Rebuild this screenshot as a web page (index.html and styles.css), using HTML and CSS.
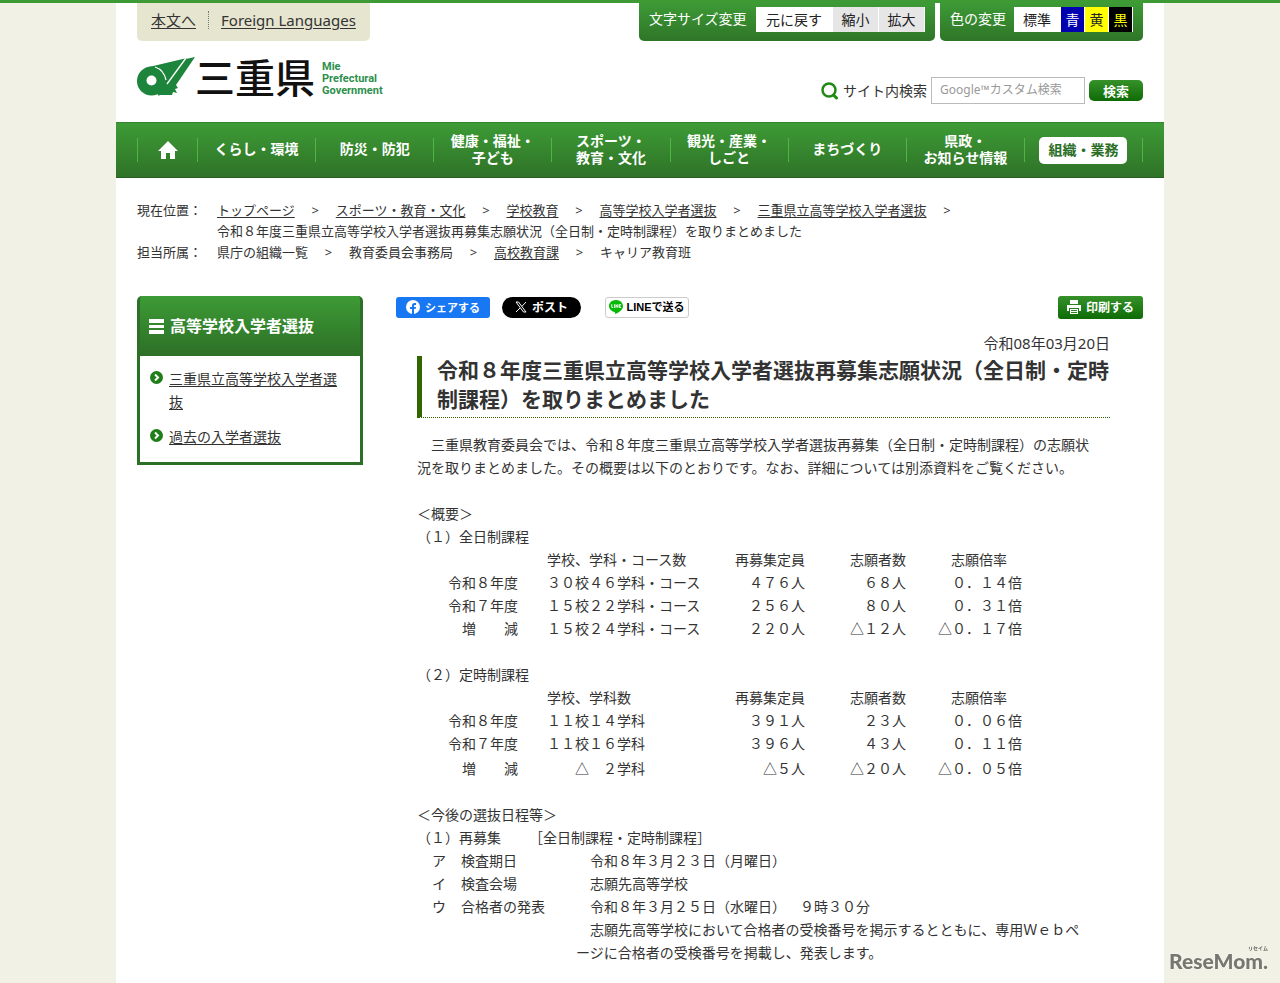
FILE: index.html
```html
<!DOCTYPE html>
<html lang="ja">
    <head>
        <meta charset="UTF-8">
        <meta name="viewport" content="width=device-width, initial-scale=1">
        <title>三重県｜令和８年度三重県立高等学校入学者選抜再募集志願状況</title>
        <link rel="stylesheet" href="styles.css">
    </head>
    <body>
        <div class="page">
            <!-- ヘッダー -->
            <header class="header">
                <div class="tools">
                    <div class="tools-links">
                        <a href="#main">本文へ</a>
                        <a href="#" class="foreign">Foreign Languages</a>
                    </div>
                    <div class="tools-box size-box">
                        <span>文字サイズ変更</span>
                        <div class="btns">
                            <button type="button" class="btn-reset">元に戻す</button>
                            <button type="button" class="btn-gray">縮小</button>
                            <button type="button" class="btn-gray">拡大</button>
                        </div>
                    </div>
                    <div class="tools-box color-box">
                        <span>色の変更</span>
                        <div class="btns">
                            <button type="button" class="btn-std">標準</button>
                            <button type="button" class="btn-blue">青</button>
                            <button type="button" class="btn-yellow">黄</button>
                            <button type="button" class="btn-black">黒</button>
                        </div>
                    </div>
                </div>
                <div class="brand">
                    <a href="#" class="logo">
                        <svg class="logo-mark" viewBox="0 0 58 42" aria-hidden="true">
                            <path fill="#1d843c" d="M12 11 L50 2 L28 31 L22 40 L14 30 Z"/>
                            <circle cx="14.500" cy="25" r="14.500" fill="#1d843c"/>
                            <path fill="none" stroke="#fff" stroke-width="1.300" d="M18 11 Q27 14 29 24"/>
                            <path fill="#1d843c" d="M49 3 L58 1 L39 29 L41 32 L38 33 L40 37 L36 36 L35 39 H22 L28 30 Z"/>
                            <path fill="none" stroke="#fff" stroke-width="1.300" d="M49 2 L30 28"/>
                            <circle cx="14.500" cy="24.500" r="5" fill="#fff"/>
                        </svg>
                        <span class="logo-name">三重県</span>
                        <span class="logo-en">Mie<br>Prefectural<br>Government</span>
                    </a>
                    <form class="search" action="#">
                        <svg class="search-icon" viewBox="0 0 18 18" aria-hidden="true">
                            <circle cx="8" cy="8" r="6.500" fill="none" stroke="#218a14" stroke-width="2.500"/>
                            <path stroke="#218a14" stroke-width="3" stroke-linecap="round" d="M12.500 13 L15.500 16"/>
                        </svg>
                        <label for="q">サイト内検索</label>
                        <input type="text" id="q" placeholder="Google™カスタム検索">
                        <button type="submit">検索</button>
                    </form>
                </div>
            </header>

            <!-- グローバルナビ -->
            <nav class="gnav">
                <ul>
                    <li class="home">
                        <a href="#" aria-label="トップページ">
                            <svg viewBox="0 0 20 18" aria-hidden="true"><path fill="#fff" d="M10 0 L20 10 H17 V18 H12 V12 H8 V18 H3 V10 H0 Z"/></svg>
                        </a>
                    </li>
                    <li><a href="#">くらし・環境</a></li>
                    <li><a href="#">防災・防犯</a></li>
                    <li><a href="#">健康・福祉・<br>子ども</a></li>
                    <li><a href="#">スポーツ・<br>教育・文化</a></li>
                    <li><a href="#">観光・産業・<br>しごと</a></li>
                    <li><a href="#">まちづくり</a></li>
                    <li><a href="#">県政・<br>お知らせ情報</a></li>
                    <li><a href="#" class="current">組織・業務</a></li>
                </ul>
            </nav>

            <!-- 現在位置 -->
            <div class="topicpath">
                <span>現在位置：</span>
                <ul>
                    <li><a href="#">トップページ</a><span class="sep">&gt;</span></li>
                    <li><a href="#">スポーツ・教育・文化</a><span class="sep">&gt;</span></li>
                    <li><a href="#">学校教育</a><span class="sep">&gt;</span></li>
                    <li><a href="#">高等学校入学者選抜</a><span class="sep">&gt;</span></li>
                    <li><a href="#">三重県立高等学校入学者選抜</a><span class="sep">&gt;</span></li>
                    <li>令和８年度三重県立高等学校入学者選抜再募集志願状況（全日制・定時制課程）を取りまとめました</li>
                </ul>
                <span>担当所属：</span>
                <ul>
                    <li>県庁の組織一覧<span class="sep">&gt;</span></li>
                    <li>教育委員会事務局<span class="sep">&gt;</span></li>
                    <li><a href="#">高校教育課</a><span class="sep">&gt;</span></li>
                    <li>キャリア教育班</li>
                </ul>
            </div>

            <div class="columns">
                <!-- サイドメニュー -->
                <aside class="side">
                    <h2>
                        <svg viewBox="0 0 15 15" aria-hidden="true"><path fill="#fff" d="M0 0 H15 V4 H0 Z M0 6 H15 V9 H0 Z M0 11 H15 V15 H0 Z"/></svg>
                        高等学校入学者選抜
                    </h2>
                    <ul>
                        <li>
                            <svg viewBox="0 0 13 13" aria-hidden="true"><circle cx="6.500" cy="6.500" r="6.500" fill="#1f7d1a"/><path fill="none" stroke="#fff" stroke-width="2" d="M5 3.500 L8 6.500 L5 9.500"/></svg>
                            <a href="#">三重県立高等学校入学者選抜</a>
                        </li>
                        <li>
                            <svg viewBox="0 0 13 13" aria-hidden="true"><circle cx="6.500" cy="6.500" r="6.500" fill="#1f7d1a"/><path fill="none" stroke="#fff" stroke-width="2" d="M5 3.500 L8 6.500 L5 9.500"/></svg>
                            <a href="#">過去の入学者選抜</a>
                        </li>
                    </ul>
                </aside>

                <!-- 本文 -->
                <main class="main" id="main">
                    <div class="share">
                        <a href="#" class="fb">
                            <svg viewBox="0 0 14 14" aria-hidden="true"><circle cx="7" cy="7" r="7" fill="#fff"/><path fill="#1877f2" d="M6 14 V9 H4 V7 H6 V5.500 Q6 3 8.500 3 H10 V5 H9 Q8 5 8 6 V7 H10 L9.600 9 H8 V14 Z"/></svg>
                            シェアする
                        </a>
                        <a href="#" class="x">
                            <svg viewBox="0 0 12 12" aria-hidden="true"><path fill="none" stroke="#fff" d="M1 1 H3.500 L11 11 H8.500 Z M11 1 L7 5.300 M5 7 L1 11"/></svg>
                            ポスト
                        </a>
                        <a href="#" class="line">
                            <svg viewBox="0 0 15 15" aria-hidden="true"><path fill="#06b906" d="M7.500 0 C3 0 0 3 0 6.500 C0 10 3 12.500 6.500 13 V15 C10 14 15 11 15 6.500 C15 3 12 0 7.500 0 Z"/><path fill="none" stroke="#fff" d="M3 4.500 V8 H4.500 M6 4.500 V8.500 M7.500 8.500 V5 L9.500 8 V4.500 M13 5 H11 V8 H13 M11 6.500 H12.500"/></svg>
                            LINEで送る
                        </a>
                        <button type="button" class="print">
                            <svg viewBox="0 0 14 14" aria-hidden="true"><path fill="#fff" d="M3 0 H11 V4 H3 Z M0 5 H14 V11 H12 V8 H2 V11 H0 Z M3 9 H11 V14 H3 Z"/><path stroke="#2a861f" d="M4 10.500 H10 M4 12.500 H10"/></svg>
                            印刷する
                        </button>
                    </div>
                    <article class="article">
                        <p class="date">令和08年03月20日</p>
                        <h1>令和８年度三重県立高等学校入学者選抜再募集志願状況（全日制・定時制課程）を取りまとめました</h1>
                        <p class="lead">　三重県教育委員会では、令和８年度三重県立高等学校入学者選抜再募集（全日制・定時制課程）の志願状況を取りまとめました。その概要は以下のとおりです。なお、詳細については別添資料をご覧ください。</p>

                        <h2>＜概要＞</h2>
                        <table>
                            <caption>（１）全日制課程</caption>
                            <tr><td></td><th>学校、学科・コース数</th><th>再募集定員</th><th>志願者数</th><th>志願倍率</th></tr>
                            <tr><th>令和８年度</th><td>３０校４６学科・コース</td><td>４７６人</td><td>６８人</td><td>０．１４倍</td></tr>
                            <tr><th>令和７年度</th><td>１５校２２学科・コース</td><td>２５６人</td><td>８０人</td><td>０．３１倍</td></tr>
                            <tr><th>増　　減</th><td>１５校２４学科・コース</td><td>２２０人</td><td>△１２人</td><td>△０．１７倍</td></tr>
                        </table>
                        <table class="teiji">
                            <caption>（２）定時制課程</caption>
                            <tr><td></td><th>学校、学科数</th><th>再募集定員</th><th>志願者数</th><th>志願倍率</th></tr>
                            <tr><th>令和８年度</th><td>１１校１４学科</td><td>３９１人</td><td>２３人</td><td>０．０６倍</td></tr>
                            <tr><th>令和７年度</th><td>１１校１６学科</td><td>３９６人</td><td>４３人</td><td>０．１１倍</td></tr>
                            <tr><th>増　　減</th><td>　　△　２学科</td><td>△５人</td><td>△２０人</td><td>△０．０５倍</td></tr>
                        </table>

                        <h2>＜今後の選抜日程等＞</h2>
                        <h3>（１）再募集　　［全日制課程・定時制課程］</h3>
                        <dl>
                            <dt><span>ア</span>検査期日</dt>
                            <dd>令和８年３月２３日（月曜日）</dd>
                            <dt><span>イ</span>検査会場</dt>
                            <dd>志願先高等学校</dd>
                            <dt><span>ウ</span>合格者の発表</dt>
                            <dd>
                                <p>令和８年３月２５日（水曜日）　９時３０分</p>
                                <p>志願先高等学校において合格者の受検番号を掲示するとともに、専用Ｗｅｂページに合格者の受検番号を掲載し、発表します。</p>
                            </dd>
                        </dl>
                    </article>
                </main>
            </div>
        </div>
        <div class="resemom"><small>リセイム</small>ReseMom.</div>
    </body>
</html>
```

FILE: styles.css
```css
*{
    box-sizing: border-box;
    margin: 0;
    padding: 0;
}
body{
    background-color: #f1f1e6;
    border-top: 3px solid #3d9a35;
    color: #333;
    font-family: "Noto Sans", "Noto Sans CJK JP", sans-serif;
    font-size: 14px;
    line-height: 23px;
    text-spacing-trim: space-all;
}
ul{
    list-style: none;
}
a{
    color: #333;
    text-underline-offset: 2px;
}
button, input{
    font-family: inherit;
    font-size: 14px;
    border: none;
}
svg{
    flex: none;
}
.page{
    max-width: 1048px;
    min-height: calc(100vh - 3px);
    margin: 0 auto;
    background-color: white;
}

/* ヘッダー */
.header{
    padding: 0 21px;
}
.tools{
    display: flex;
    align-items: flex-start;
    gap: 5px;
}
.tools-links{
    display: flex;
    align-items: center;
    height: 38px;
    margin-right: auto;
    padding: 0 14px 4px;
    background-color: #e6e5d0;
    border-radius: 0 0 5px 5px;
    font-size: 15px;
    line-height: 18px;
}
.tools-links .foreign{
    margin-left: 12px;
    padding-left: 12px;
    border-left: 1px dotted #777;
}
.tools-box{
    display: flex;
    gap: 8px;
    height: 38px;
    padding: 4px 10px 0;
    background: linear-gradient(#3d9a35, #2f7528);
    border-radius: 0 0 5px 5px;
    color: white;
}
.size-box{
    width: 296px;
}
.color-box{
    width: 203px;
}
.tools-box span{
    flex: 1;
    white-space: nowrap;
}
.btns{
    display: flex;
    gap: 1px;
    height: 25px;
    padding-right: 1px;
    background-color: white;
}
.btns button{
    padding-bottom: 2px;
    background-color: white;
    color: #222;
}
.btns .btn-reset{
    width: 76px;
}
.btns .btn-gray{
    width: 45px;
    background-color: #e6e6e6;
}
.btns .btn-std{
    width: 46px;
}
.btns .btn-blue{
    width: 23px;
    background-color: #0000b0;
    color: white;
}
.btns .btn-yellow{
    width: 23px;
    background-color: #ff0;
}
.btns .btn-black{
    width: 23px;
    background-color: black;
    color: #ff0;
}
.brand{
    display: flex;
    justify-content: space-between;
    height: 81px;
    padding-top: 15px;
}
.logo{
    display: flex;
    height: 44px;
    text-decoration: none;
}
.logo-mark{
    width: 58px;
    height: 42px;
}
.logo-name{
    color: #111;
    font-size: 40px;
    font-weight: 500;
    line-height: 44px;
}
.logo-en{
    margin: 5px 0 0 7px;
    color: #2d8f4c;
    font-family: Roboto, sans-serif;
    font-size: 11px;
    font-weight: bold;
    line-height: 12px;
}
.search{
    display: flex;
    align-items: center;
    gap: 4px;
    height: 27px;
    margin-top: 21px;
    font-size: 14px;
}
.search-icon{
    width: 18px;
    height: 18px;
}
.search input{
    width: 154px;
    height: 27px;
    padding: 0 8px 2px;
    border: 1px solid #bbb;
    font-size: 12px;
}
.search input::placeholder{
    color: #999;
}
.search button{
    width: 54px;
    height: 21px;
    background: linear-gradient(#36912a, #0e6b05);
    border-radius: 5px;
    color: white;
    font-size: 13px;
    font-weight: bold;
    line-height: 18px;
}

/* グローバルナビ */
.gnav{
    height: 56px;
    padding: 0 21px;
    background: linear-gradient(#3d9b35, #2f7228);
    border-top: 1px solid #35842d;
    border-bottom: 1px solid #286222;
}
.gnav ul{
    display: flex;
    height: 54px;
    align-items: center;
}
.gnav li{
    display: flex;
    flex: 1;
    align-items: center;
    justify-content: center;
    height: 24px;
    border-left: 1px solid #4fb544;
}
.gnav li:last-child{
    border-right: 1px solid #4fb544;
}
.gnav .home{
    flex: 0 0 60px;
}
.gnav svg{
    display: block;
    width: 20px;
    height: 18px;
}
.gnav a{
    padding-bottom: 3px;
    color: white;
    font-weight: bold;
    line-height: 17px;
    text-align: center;
    text-decoration: none;
    white-space: nowrap;
}
.gnav .home a{
    padding: 0;
}
.gnav .current{
    padding: 4px 9px 6px;
    background-color: white;
    border-radius: 5px;
    color: #2b6e25;
}

/* 現在位置 */
.topicpath{
    display: grid;
    grid-template-columns: 80px 1fr;
    padding: 22px 21px 0;
    font-size: 13px;
    line-height: 21px;
}
.topicpath ul{
    display: flex;
    flex-wrap: wrap;
}
.topicpath li{
    display: flex;
}
.sep{
    width: 41px;
    text-align: center;
}

.columns{
    display: flex;
    align-items: flex-start;
    gap: 33px;
    padding: 33px 21px 18px;
}

/* サイドメニュー */
.side{
    flex: 0 0 226px;
    border: 3px solid #2d6f27;
    border-top: none;
    border-radius: 5px 5px 0 0;
    background: linear-gradient(#3d9b35, #2d6f27 60px) border-box;
}
.side h2{
    display: flex;
    align-items: center;
    gap: 6px;
    height: 60px;
    padding-left: 9px;
    color: white;
    font-size: 16px;
}
.side h2 svg{
    width: 15px;
    height: 15px;
}
.side ul{
    display: grid;
    gap: 12px;
    padding: 11px 10px 14px;
    background-color: white;
}
.side li{
    display: flex;
    gap: 6px;
}
.side li svg{
    width: 13px;
    height: 13px;
    margin-top: 4px;
}

/* 本文 */
.main{
    flex: 1;
}
.share{
    display: flex;
    align-items: center;
    height: 22px;
    font-size: 12px;
    font-weight: bold;
}
.share a, .share button{
    display: flex;
    align-items: center;
    justify-content: center;
    gap: 5px;
    height: 21px;
    color: white;
    text-decoration: none;
    white-space: nowrap;
}
.share svg{
    width: 14px;
    height: 14px;
}
.share .fb{
    width: 94px;
    background-color: #1877f2;
    border-radius: 3px;
    font-size: 11px;
}
.share .x{
    width: 79px;
    margin-left: 12px;
    background-color: black;
    border-radius: 11px;
}
.share .x svg{
    width: 12px;
    height: 12px;
}
.share .line{
    width: 84px;
    margin-left: 24px;
    gap: 3px;
    border: 1px solid #ccc;
    border-radius: 3px;
    color: black;
    font-family: "Liberation Sans", "Noto Sans CJK JP", sans-serif;
    font-size: 11px;
}
.share .print{
    width: 85px;
    height: 23px;
    margin-left: auto;
    background: linear-gradient(#36912a, #0e6b05);
    border-radius: 3px;
    font-size: 12px;
    font-weight: bold;
}
.article{
    padding: 14px 33px 0 21px;
}
.date{
    font-size: 15px;
    text-align: right;
}
.article h1{
    margin-top: 1px;
    padding: 0 0 3px 15px;
    border-left: 5px solid #360;
    border-bottom: 1px dotted #360;
    font-size: 21px;
    line-height: 29px;
}
.lead{
    margin: 15px 0 23px;
    padding-right: 15px;
}
.article h2, .article h3{
    font-size: 14px;
    font-weight: normal;
}
.article table{
    width: 605px;
    margin-bottom: 23px;
    border-collapse: collapse;
    table-layout: fixed;
}
.article caption{
    text-align: left;
}
.article th, .article td{
    font-weight: normal;
    text-align: right;
    white-space: nowrap;
}
.article tr > :nth-child(1){
    width: 101px;
}
.article tr > :nth-child(2){
    width: 200px;
    padding-left: 29px;
    text-align: left;
}
.article tr > :nth-child(3){
    width: 87px;
}
.article tr > :nth-child(4){
    width: 101px;
}
.article tr > th:nth-child(5){
    padding-right: 15px;
}
.article .teiji tr:last-child > *{
    padding-top: 2px;
}
.article dl{
    display: grid;
    grid-template-columns: 144px 1fr;
    padding: 0 20px 0 15px;
}
.article dt{
    display: flex;
    gap: 15px;
}
.article dd{
    text-indent: 14px;
}

.resemom{
    display: flex;
    flex-direction: column;
    position: fixed;
    right: 12px;
    bottom: 11px;
    color: #777770;
    font-family: Lato, sans-serif;
    font-size: 21px;
    font-weight: 900;
    line-height: 22px;
    text-shadow: 0 0 2px white;
}
.resemom small{
    align-self: flex-end;
    font-family: "Noto Sans CJK JP", sans-serif;
    font-size: 5px;
    line-height: 4px;
}
```
